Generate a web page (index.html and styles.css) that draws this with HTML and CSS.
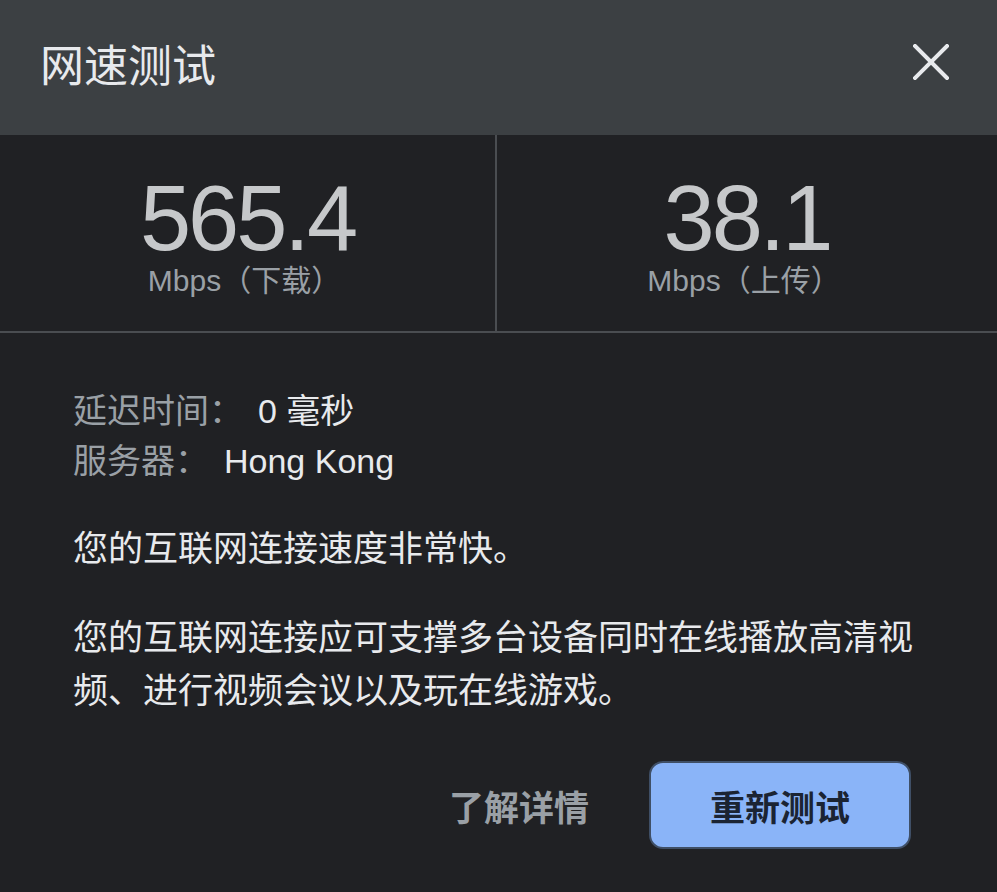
FILE: index.html
```html
<!DOCTYPE html>
<html lang="zh-CN">
<head>
<meta charset="utf-8">
<title>网速测试</title>
<link rel="stylesheet" href="styles.css">
</head>
<body>
<div class="dialog">
  <header class="header">
    <h1 class="title">网速测试</h1>
    <button class="close" aria-label="关闭">
      <svg width="36" height="36" viewBox="0 0 36 36"><path d="M2 2 L34 34 M34 2 L2 34" stroke="#e8eaed" stroke-width="4" stroke-linecap="square" fill="none"/></svg>
    </button>
  </header>
  <section class="metrics">
    <div class="metric">
      <div class="value">565.4</div>
      <div class="unit">Mbps（下载）</div>
    </div>
    <div class="metric">
      <div class="value">38.1</div>
      <div class="unit">Mbps（上传）</div>
    </div>
  </section>
  <section class="content">
    <div class="info">
      <div class="row"><span class="label">延迟时间：</span><span class="val">0 毫秒</span></div>
      <div class="row"><span class="label">服务器：</span><span class="val">Hong Kong</span></div>
    </div>
    <p class="text">您的互联网连接速度非常快。</p>
    <p class="text">您的互联网连接应可支撑多台设备同时在线播放高清视频、进行视频会议以及玩在线游戏。</p>
    <div class="actions">
      <a class="link">了解详情</a>
      <button class="primary">重新测试</button>
    </div>
  </section>
</div>
</body>
</html>
```
FILE: styles.css
```css
html, body {
  margin: 0;
  padding: 0;
  background: #202124;
}
body {
  width: 997px;
  height: 892px;
  overflow: hidden;
  font-family: "Liberation Sans", "Noto Sans CJK SC", sans-serif;
  color: #e8eaed;
}
.dialog {
  width: 997px;
}
.header {
  height: 135px;
  background: #3c4043;
  display: flex;
  align-items: center;
  justify-content: space-between;
  padding: 0 48px 0 40px;
  box-sizing: border-box;
}
.title {
  margin: 0;
  font-size: 44px;
  font-weight: normal;
  line-height: 1;
  color: #e8eaed;
  padding-bottom: 2px;
}
.close {
  background: none;
  border: 0;
  padding: 0;
  width: 36px;
  height: 36px;
  margin-bottom: 12px;
  display: flex;
}
.metrics {
  display: grid;
  grid-template-columns: 497px 1fr;
  border-bottom: 2px solid #4a4d51;
  height: 198px;
  box-sizing: border-box;
}
.metric {
  text-align: center;
  padding-top: 37px;
}
.metric:first-child {
  border-right: 2px solid #4a4d51;
}
.value {
  font-size: 92px;
  line-height: 92px;
  letter-spacing: -3px;
  color: #c6c8ca;
}
.unit {
  font-size: 30px;
  line-height: 34px;
  color: #9aa0a6;
  padding-right: 6px;
}
.content {
  padding: 53px 73px 0 73px;
}
.info .row {
  font-size: 34px;
  line-height: 50px;
  display: flex;
}
.label {
  color: #9aa0a6;
  margin-right: 15px;
}
.val {
  color: #e8eaed;
}
.text {
  margin: 36px 0 0 0;
  font-size: 35px;
  line-height: 53px;
  color: #e8eaed;
}
.actions {
  display: flex;
  justify-content: flex-end;
  align-items: center;
  gap: 60px;
  margin-top: 44px;
  padding-right: 13px;
}
.link {
  font-size: 35px;
  font-weight: bold;
  color: #9aa0a6;
}
.primary {
  width: 262px;
  height: 88px;
  background: #8ab4f8;
  border: 2px solid #3f4f66;
  border-radius: 14px;
  font-family: "Liberation Sans", "Noto Sans CJK SC", sans-serif;
  font-size: 35px;
  font-weight: bold;
  color: #1b2433;
  padding: 0;
}
```
